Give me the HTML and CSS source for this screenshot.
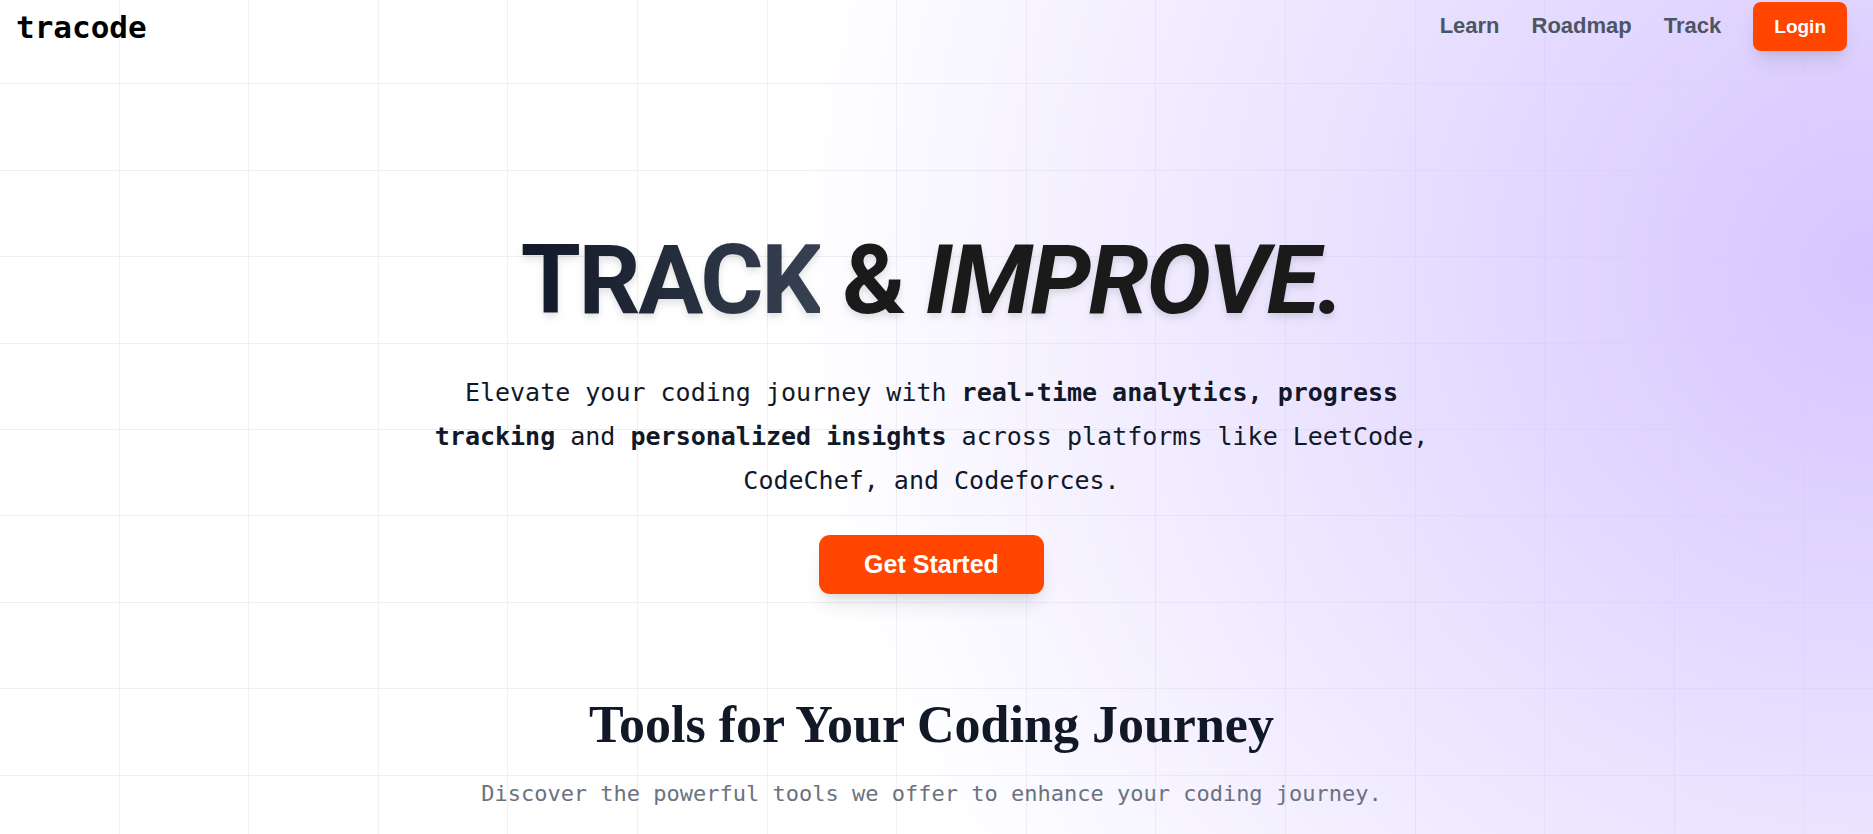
FILE: index.html
```html
<!DOCTYPE html>
<html lang="en">
<head>
  <meta charset="utf-8">
  <meta name="viewport" content="width=device-width, initial-scale=1">
  <title>tracode</title>
  <link rel="stylesheet" href="styles.css">
</head>
<body>
  <header class="header">
    <a class="logo" href="#">tracode</a>
    <nav class="nav">
      <a class="nav-link" href="#">Learn</a>
      <a class="nav-link" href="#">Roadmap</a>
      <a class="nav-link" href="#">Track</a>
      <button class="button button-small" type="button">Login</button>
    </nav>
  </header>
  <main class="main">
    <section class="hero">
      <h1 class="title"><span class="title-accent">TRACK</span> &amp; <em>IMPROVE.</em></h1>
      <p class="lead">Elevate your coding journey with <strong>real-time analytics, progress tracking</strong> and <strong>personalized insights</strong> across platforms like LeetCode, CodeChef, and Codeforces.</p>
      <button class="button button-large" type="button">Get Started</button>
    </section>
    <section class="tools">
      <h2 class="tools-title">Tools for Your Coding Journey</h2>
      <p class="tools-text">Discover the powerful tools we offer to enhance your coding journey.</p>
    </section>
  </main>
</body>
</html>
```
FILE: styles.css
```css
* {
  box-sizing: border-box;
  margin: 0;
}

html {
  min-height: 100%;
  background: #fff;
}

/* Each grid tile holds five cells in both directions. */
body {
  min-height: 100vh;
  overflow-x: hidden;
  background-image:
    radial-gradient(circle 1080px at 100% 267px, #d5c5ff, transparent),
    repeating-linear-gradient(to right, #f0f0f0 0 1px, transparent 1px 20%),
    repeating-linear-gradient(to bottom, #f0f0f0 0 1px, transparent 1px 20%);
  background-size: auto, 648px 432px, 648px 432px;
  background-position: 0 0, -11px -3px, -11px -3px;
  font-family: "Liberation Sans", Arial, sans-serif;
  color: #111827;
}

.header {
  display: flex;
  align-items: center;
  justify-content: space-between;
  padding: 2px 26px 2px 16px;
}

.logo {
  font: bold 31px/48px "DejaVu Sans Mono", monospace;
  color: #000;
  text-decoration: none;
}

.nav {
  display: flex;
  align-items: center;
  gap: 32px;
}

.nav-link {
  padding-bottom: 2px;
  font-size: 22px;
  line-height: 32px;
  font-weight: bold;
  color: #4b5563;
  text-decoration: none;
}

.button {
  border: 0;
  background: #ff4500;
  color: #fff;
  font-family: inherit;
  font-weight: bold;
  box-shadow: 0 14px 20px -4px rgba(0, 0, 0, 0.1), 0 5px 8px -5px rgba(0, 0, 0, 0.1);
  cursor: pointer;
}

.button-small {
  padding: 11px 21px;
  border-radius: 8px;
  font-size: 19px;
  line-height: 27px;
}

.button-large {
  padding: 11px 45px;
  border-radius: 11px;
  font-size: 25px;
  line-height: 37px;
}

.main {
  padding: 179px 10px 20px 0;
  text-align: center;
}

.hero {
  display: flex;
  flex-direction: column;
  align-items: center;
}

.title {
  font: bold 97px/97px Roboto, sans-serif;
  letter-spacing: -0.025em;
  color: #1a1a1a;
  filter: drop-shadow(0 5px 4px rgba(0, 0, 0, 0.07)) drop-shadow(0 3px 3px rgba(0, 0, 0, 0.06));
}

.title-accent {
  background: linear-gradient(to right, #111827, #374151);
  background-clip: text;
  -webkit-background-clip: text;
  color: transparent;
}

.lead {
  max-width: 1020px;
  margin: 42px 0 32px;
  font: 25px/44px "DejaVu Sans Mono", monospace;
}

.tools {
  margin-top: 102px;
}

.tools-title {
  font: bold 52px/58px "Liberation Serif", serif;
}

.tools-text {
  margin-top: 21px;
  font: 22px/38px "DejaVu Sans Mono", monospace;
  color: #6b7280;
}
```
